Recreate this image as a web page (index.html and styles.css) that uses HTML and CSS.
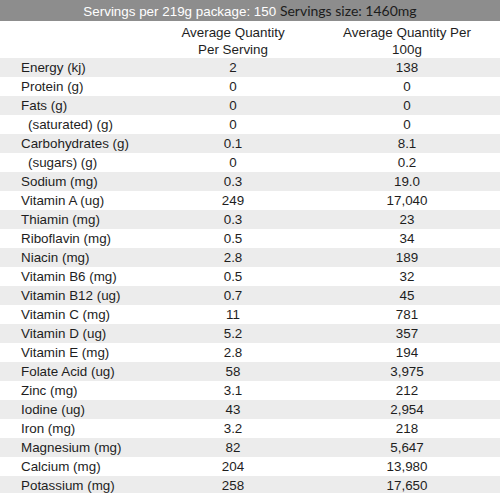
FILE: index.html
```html
<!DOCTYPE html>
<html>
<head>
<meta charset="utf-8">
<link rel="stylesheet" href="styles.css">
</head>
<body>
<div class="bar"><span class="bar-a">Servings per 219g package: 150</span> <span class="bar-b">Servings size: 1460mg</span></div>
<table class="nut">
<colgroup><col class="c1"><col class="c2"><col class="c3"></colgroup>
<thead>
<tr class="head"><th></th><th>Average Quantity<br>Per Serving</th><th>Average Quantity Per<br>100g</th></tr>
</thead>
<tbody>
<tr><td>Energy (kj)</td><td>2</td><td>138</td></tr>
<tr><td>Protein (g)</td><td>0</td><td>0</td></tr>
<tr><td>Fats (g)</td><td>0</td><td>0</td></tr>
<tr><td class="sub">(saturated) (g)</td><td>0</td><td>0</td></tr>
<tr><td>Carbohydrates (g)</td><td>0.1</td><td>8.1</td></tr>
<tr><td class="sub">(sugars) (g)</td><td>0</td><td>0.2</td></tr>
<tr><td>Sodium (mg)</td><td>0.3</td><td>19.0</td></tr>
<tr><td>Vitamin A (ug)</td><td>249</td><td>17,040</td></tr>
<tr><td>Thiamin (mg)</td><td>0.3</td><td>23</td></tr>
<tr><td>Riboflavin (mg)</td><td>0.5</td><td>34</td></tr>
<tr><td>Niacin (mg)</td><td>2.8</td><td>189</td></tr>
<tr><td>Vitamin B6 (mg)</td><td>0.5</td><td>32</td></tr>
<tr><td>Vitamin B12 (ug)</td><td>0.7</td><td>45</td></tr>
<tr><td>Vitamin C (mg)</td><td>11</td><td>781</td></tr>
<tr><td>Vitamin D (ug)</td><td>5.2</td><td>357</td></tr>
<tr><td>Vitamin E (mg)</td><td>2.8</td><td>194</td></tr>
<tr><td>Folate Acid (ug)</td><td>58</td><td>3,975</td></tr>
<tr><td>Zinc (mg)</td><td>3.1</td><td>212</td></tr>
<tr><td>Iodine (ug)</td><td>43</td><td>2,954</td></tr>
<tr><td>Iron (mg)</td><td>3.2</td><td>218</td></tr>
<tr><td>Magnesium (mg)</td><td>82</td><td>5,647</td></tr>
<tr><td>Calcium (mg)</td><td>204</td><td>13,980</td></tr>
<tr><td>Potassium (mg)</td><td>258</td><td>17,650</td></tr>
</tbody>
</table>
</body>
</html>
```
FILE: styles.css
```css
html, body {
  margin: 0;
  padding: 0;
  background: #ffffff;
}
body {
  font-family: "Liberation Sans", Arial, sans-serif;
  font-size: 13.4px;
  color: #1e1e1e;
  width: 500px;
}
.bar {
  height: 21px;
  line-height: 21px;
  background: #8d8d8d;
  text-align: center;
  white-space: nowrap;
}
.bar-a {
  color: #ffffff;
}
.bar-b {
  font-family: Lato, "Open Sans", sans-serif;
  font-size: 14px;
  color: #1c1c1c;
}
.nut {
  width: 500px;
  border-collapse: collapse;
  table-layout: fixed;
}
.c1 { width: 152px; }
.c2 { width: 162px; }
.c3 { width: 186px; }
.nut th {
  font-weight: normal;
  text-align: center;
  line-height: 16.5px;
  padding: 4px 0 0 0;
  vertical-align: top;
}
.nut td {
  height: 19px;
  padding: 0;
  line-height: 19px;
  text-align: center;
  white-space: nowrap;
}
.nut td:first-child {
  text-align: left;
  padding-left: 21px;
}
.nut td.sub {
  padding-left: 28px;
}
.nut tbody tr:nth-child(odd) {
  background: #ececec;
}
```
